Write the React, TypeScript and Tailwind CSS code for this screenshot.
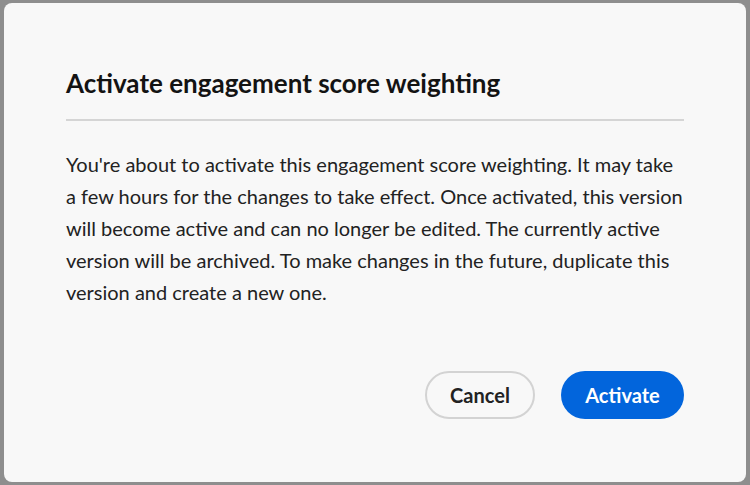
export default function App() {
  return (
    <div className="w-[750px] h-[485px] bg-[#8e8e8e] pl-[4px] pt-[3px] pr-[4px] pb-[3px]" style={{ fontFamily: "Lato, 'Open Sans', sans-serif" }}>
      <div className="w-full h-full bg-[#f8f8f8] rounded-[8px] pl-[62px] pr-[62px] pt-[64px] flex flex-col">
        <h1 className="text-[26px] leading-[32px] font-bold text-[#131313]">Activate engagement score weighting</h1>
        <div className="mt-[20px] h-[2px] bg-[#d5d5d5]" />
        <p className="mt-[27px] text-[20px] leading-[32px] text-[#222] whitespace-nowrap">
          You're about to activate this engagement score weighting. It may take<br />
          a few hours for the changes to take effect. Once activated, this version<br />
          will become active and can no longer be edited. The currently active<br />
          version will be archived. To make changes in the future, duplicate this<br />
          version and create a new one.
        </p>
        <div className="mt-[63px] flex justify-end gap-[26px]">
          <button className="h-[48px] w-[110px] rounded-full border-[2px] border-[#d3d3d3] text-[20px] font-bold text-[#222]">Cancel</button>
          <button className="h-[48px] w-[123px] rounded-full bg-[#0265dc] text-[20px] font-bold text-white">Activate</button>
        </div>
      </div>
    </div>
  );
}
